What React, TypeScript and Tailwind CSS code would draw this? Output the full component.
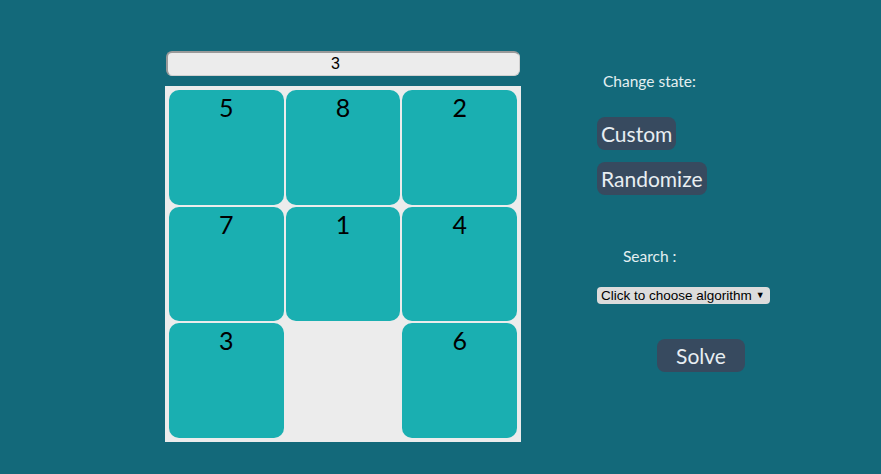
const tiles = [5, 8, 2, 7, 1, 4, 3, 0, 6];

const Tile = ({ n }: { n: number }) => {
  if (!n) return <div />;
  return (
    <div className="bg-[#1aafb1] rounded-[10px] flex justify-center pt-[2px]">
      <span className="text-[25px] leading-[30px] text-black font-['Lato',sans-serif]">{n}</span>
    </div>
  );
};

export default function App() {
  return (
    <div className="w-full h-[474px] bg-[#13697a] flex font-['Lato',sans-serif] overflow-hidden">
      <div className="ml-[165px] mt-[51px] w-[356px] flex flex-col">
        <div className="mx-[1px] h-[25px] rounded-[6px] bg-[#ececec] border-t-2 border-l-2 border-[#9a9a9a] border-r border-b border-r-[#d0d0d0] border-b-[#d0d0d0] flex items-center justify-center pr-[16px]">
          <span className="text-[16px] text-black font-['Liberation_Sans',sans-serif]">3</span>
        </div>
        <div className="mt-[10px] h-[356px] bg-[#ececec] p-[4px] grid grid-cols-3 grid-rows-3 gap-[2px]">
          {tiles.map((n, i) => (
            <Tile key={i} n={n} />
          ))}
        </div>
      </div>

      <div className="ml-[76px] mt-[71px] flex flex-col items-start">
        <p className="ml-[6px] text-[15.5px] leading-[20px] text-[#e3eff1]">Change state:</p>
        <button className="mt-[26px] h-[33px] px-[4px] rounded-[8px] bg-[#374a5f] text-[21px] text-[#e8eef2]">
          Custom
        </button>
        <button className="mt-[12px] h-[33px] px-[4px] rounded-[8px] bg-[#374a5f] text-[21px] text-[#e8eef2]">
          Randomize
        </button>
        <p className="ml-[26px] mt-[51px] text-[15.5px] leading-[20px] text-[#e3eff1]">Search :</p>
        <div className="mt-[21px] h-[17px] rounded-[4px] bg-[#dcdcdc] flex items-center pl-[4px] pr-[5px] gap-[4px] whitespace-nowrap font-['Liberation_Sans',sans-serif] text-[13.5px] leading-[17px] text-black">
          <span>Click to choose algorithm</span>
          <span className="text-[9px]">▼</span>
        </div>
        <button className="ml-[60px] mt-[35px] h-[33px] w-[88px] rounded-[8px] bg-[#374a5f] text-[21px] text-[#e8eef2]">
          Solve
        </button>
      </div>
    </div>
  );
}
